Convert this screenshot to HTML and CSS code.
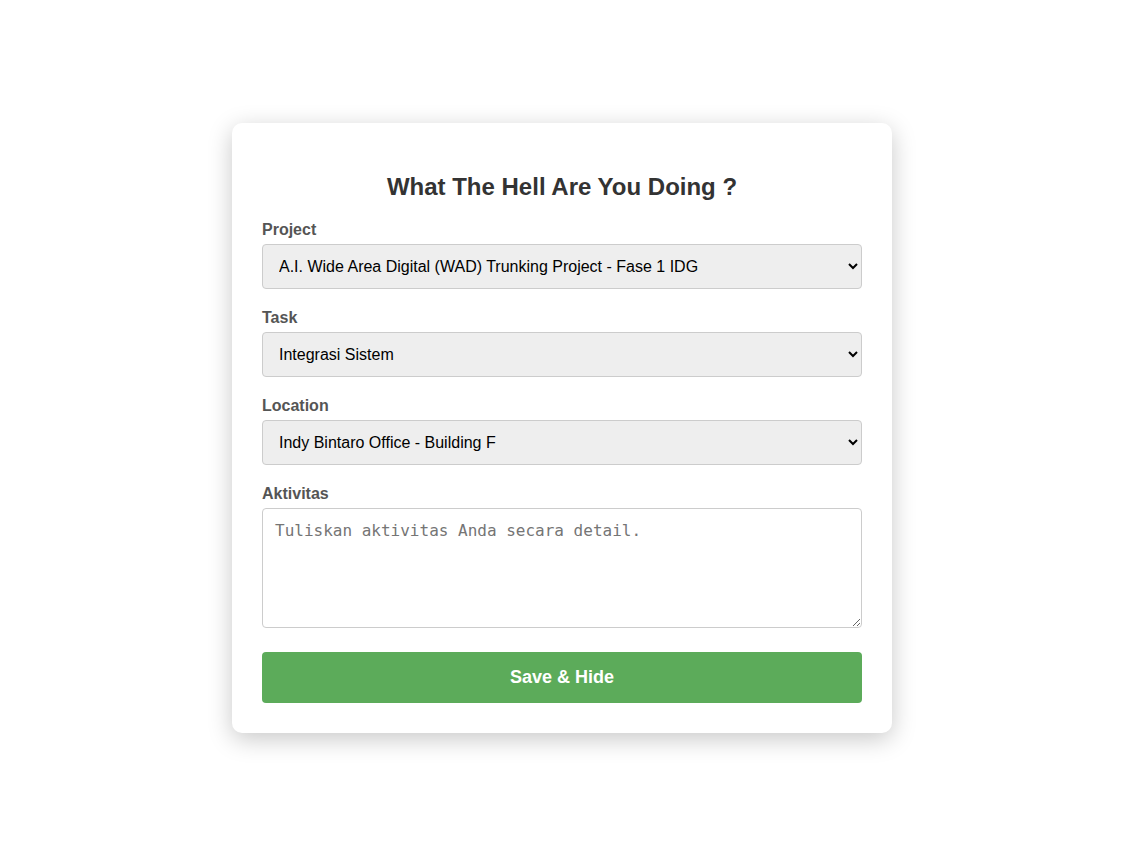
FILE: index.html
```html
<!DOCTYPE html>
<html>
<head>
<meta charset="utf-8">
<link rel="stylesheet" href="styles.css">
</head>
<body>
<div class="page">
  <form class="card">
    <h2 class="title">What The Hell Are You Doing ?</h2>
    <label class="label" for="project">Project</label>
    <select id="project" class="field select">
      <option>A.I. Wide Area Digital (WAD) Trunking Project - Fase 1 IDG</option>
    </select>
    <label class="label" for="task">Task</label>
    <select id="task" class="field select">
      <option>Integrasi Sistem</option>
    </select>
    <label class="label" for="location">Location</label>
    <select id="location" class="field select">
      <option>Indy Bintaro Office - Building F</option>
    </select>
    <label class="label" for="aktivitas">Aktivitas</label>
    <textarea id="aktivitas" class="field textarea" placeholder="Tuliskan aktivitas Anda secara detail."></textarea>
    <button type="button" class="btn">Save &amp; Hide</button>
  </form>
</div>
</body>
</html>
```
FILE: styles.css
```css
html, body {
  margin: 0;
  padding: 0;
  background: #ffffff;
  font-family: "Liberation Sans", Arial, sans-serif;
}
.page {
  box-sizing: border-box;
  min-height: 100vh;
  display: flex;
  justify-content: center;
  align-items: flex-start;
  padding: 123px 3px 0 0;
}
.card {
  width: 600px;
  padding: 30px;
  background: #fff;
  border-radius: 10px;
  box-shadow: 0 6px 24px rgba(0, 0, 0, 0.22);
  display: flex;
  flex-direction: column;
}
.title {
  margin: 20px 0 20px;
  text-align: center;
  font-size: 24px;
  line-height: 28px;
  font-weight: bold;
  color: #333;
}
.label {
  display: block;
  font-size: 16px;
  line-height: 18px;
  font-weight: bold;
  color: #555;
  margin-bottom: 5px;
}
.field {
  box-sizing: border-box;
  width: 600px;
  border: 1px solid #ccc;
  border-radius: 4px;
  font-size: 16px;
  margin: 0 0 20px;
}
.select {
  height: 45px;
  padding: 0 8px 0 12px;
  background: #eeeeee;
  color: #000;
  font-family: "Liberation Sans", Arial, sans-serif;
}
.textarea {
  height: 120px;
  padding: 12px;
  font-family: "DejaVu Sans Mono", monospace;
  line-height: 19px;
  resize: vertical;
  margin-bottom: 24px;
  background: #fff;
}
.textarea::placeholder {
  color: #757575;
}
.btn {
  height: 51px;
  border: none;
  border-radius: 4px;
  background: #5cab5a;
  color: #fff;
  font-family: "Liberation Sans", Arial, sans-serif;
  font-size: 18px;
  font-weight: bold;
  cursor: pointer;
}
```
